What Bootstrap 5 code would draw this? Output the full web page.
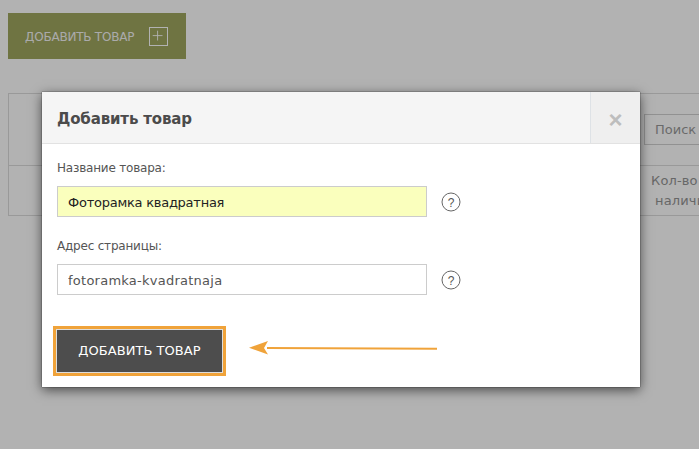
<!DOCTYPE html>
<html lang="ru">
<head>
<meta charset="utf-8">
<title>Добавить товар</title>
<link rel="stylesheet" href="https://cdn.jsdelivr.net/npm/bootstrap@5.3.0/dist/css/bootstrap.min.css">
<style>
html,body{height:449px;width:699px;overflow:hidden}
body{background:#fff;font-family:"DejaVu Sans",sans-serif;font-size:12px;color:#555;position:relative}
.page-wrap{padding:13px 0 0 8px;width:699px;overflow:hidden}
.add-top{background:#9fa65f;color:#f4f4f4;height:46px;width:178px;font-size:12px;letter-spacing:-.22px;padding:1px 18px 0 17px;border-radius:0;border:0;white-space:nowrap}
.add-top:hover{background:#9fa65f;color:#f4f4f4}
.plus-box{width:19px;height:19px;border:1px solid #fff;display:block;margin-top:-1px}
.bg-table{margin-top:34px;width:760px;height:123px;border:1px solid #dcdcdc}
.bg-head{height:72px;border-bottom:1px solid #dcdcdc;padding:20px 0 0 635px}
.bg-search{border:1px solid #d0d0d0;width:80px;height:31px;padding:5px 10px;font-size:13px;color:#999;background:#fff}
.bg-row{padding:5px 0 0 642px;line-height:20px;font-size:13px;letter-spacing:.15px;color:#949494;white-space:nowrap}
.bg-row span{display:block;padding-left:4px}
.veil{position:absolute;inset:0;background:rgba(0,0,0,.3)}
.dlg{position:absolute;left:42px;top:92px;width:598px;height:295px;background:#fff;border:0;border-radius:0;box-shadow:0 0 1px rgba(0,0,0,.9),0 3px 11px rgba(0,0,0,.6)}
.dlg-head{height:52px;background:#f5f5f5;border-bottom:1px solid #e2e2e2;padding-left:15px}
.dlg-title{font:bold 15px "DejaVu Sans",sans-serif;letter-spacing:-.15px;color:#4b4b4b;margin:2px 0 0}
.dlg-x{width:50px;height:51px;background:#efefef;color:#bdbdbd;font:bold 24px/1 "Liberation Sans",sans-serif;padding:4px 0 0}
.dlg-body{padding:15px 15px 0}
.fld-label{font-size:12px;color:#555;letter-spacing:-.2px;line-height:18px;margin:0 0 9px;display:block}
.fld-row{gap:14px;margin-bottom:20px}
.fld-input{width:370px;height:31px;border:1px solid #ccc;border-radius:0;font-size:13px;color:#555;padding:1px 10px 0;box-shadow:none;letter-spacing:.25px}
.fld-input.filled{background:#faffbd;color:#222;border-color:#ccc;letter-spacing:-.25px}
.help-ico{width:20px;height:20px;display:block;flex:none}
.save-frame{display:inline-block;border:3px solid #f0a33a;background:#ddd;margin:11px 0 0 -4px;padding:1px}
.save-btn{display:block;width:165px;height:42px;padding:0;background:#4d4d4d;color:#fff;border:0;border-radius:0;font-size:13px;letter-spacing:.05px}
.save-btn:hover{background:#4d4d4d;color:#fff}
.hint-arrow{position:absolute;left:207px;top:248px}
</style>
</head>
<body>
<div class="page-wrap">
  <button type="button" class="btn add-top d-flex align-items-center justify-content-between">ДОБАВИТЬ ТОВАР
    <svg class="plus-box" viewBox="0 0 19 19" aria-hidden="true"><path d="M8.5 3v11M3 8.5h11" stroke="#fff" stroke-width="1" fill="none"/></svg>
  </button>
  <div class="bg-table">
    <div class="bg-head"><div class="bg-search">Поиск</div></div>
    <div class="bg-row">Кол-во<span>наличии</span></div>
  </div>
</div>
<div class="veil"></div>
<div class="dlg d-flex flex-column">
  <div class="dlg-head d-flex align-items-center justify-content-between">
    <h5 class="dlg-title">Добавить товар</h5>
    <button type="button" class="dlg-x border-0 border-start" aria-label="Закрыть">×</button>
  </div>
  <form class="dlg-body">
    <label class="fld-label" for="p-name">Название товара:</label>
    <div class="fld-row d-flex align-items-center">
      <input id="p-name" class="form-control fld-input filled" value="Фоторамка квадратная">
      <svg class="help-ico" viewBox="0 0 20 20"><circle cx="10" cy="10" r="9" fill="none" stroke="#666"/><text x="10" y="14.5" text-anchor="middle" font-size="12" fill="#555" font-family="Liberation Sans, sans-serif">?</text></svg>
    </div>
    <label class="fld-label" for="p-url">Адрес страницы:</label>
    <div class="fld-row d-flex align-items-center">
      <input id="p-url" class="form-control fld-input" value="fotoramka-kvadratnaja">
      <svg class="help-ico" viewBox="0 0 20 20"><circle cx="10" cy="10" r="9" fill="none" stroke="#666"/><text x="10" y="14.5" text-anchor="middle" font-size="12" fill="#555" font-family="Liberation Sans, sans-serif">?</text></svg>
    </div>
    <span class="save-frame"><button type="button" class="btn save-btn">ДОБАВИТЬ ТОВАР</button></span>
  </form>
  <svg class="hint-arrow" width="190" height="16" viewBox="0 0 190 16" aria-hidden="true"><path d="M188 8.7 L18 8" stroke="#f0a33a" stroke-width="2" fill="none"/><path d="M0 7.8 L19 1 L15 8 L19 14.5Z" fill="#f0a33a"/></svg>
</div>
<script src="https://cdn.jsdelivr.net/npm/bootstrap@5.3.0/dist/js/bootstrap.bundle.min.js"></script>
</body>
</html>
